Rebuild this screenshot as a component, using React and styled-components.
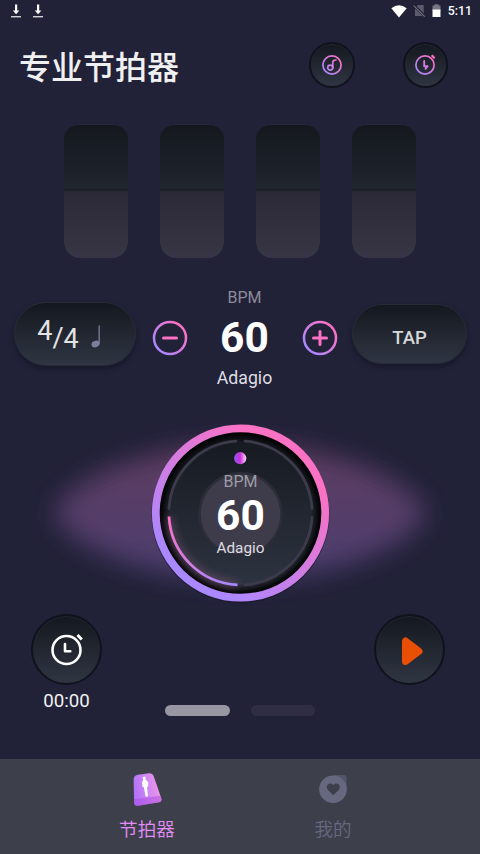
import React from 'react';
import styled, { createGlobalStyle, ThemeProvider } from 'styled-components';

const theme = {
  colors: {
    background: '#212138',
    nav: '#3d404b',
    text: '#f0f0f0',
    muted: '#8d8c99',
    mutedLight: '#9d9da5',
    pink: '#fb71c3',
    purple: '#aa88ff',
    play: '#e94f04',
    active: '#e38cf5',
    inactive: '#666880',
    surfaceTop: '#14181f',
    surfaceBottom: '#2f3542',
  },
};

const GlobalStyle = createGlobalStyle`
  * {
    box-sizing: border-box;
  }

  body {
    margin: 0;
    background: #212138;
    font-family: Roboto, 'Noto Sans CJK SC', sans-serif;
  }
`;

const Screen = styled.div`
  width: 480px;
  height: 854px;
  display: flex;
  flex-direction: column;
  overflow: hidden;
  color: ${({ theme }) => theme.colors.text};
  background: ${({ theme }) => theme.colors.background};

  > * {
    flex: none;
  }

  svg {
    display: block;
    flex: none;
  }
`;

const StatusBar = styled.div`
  height: 22px;
  padding: 0 8px 0 10px;
  display: flex;
  align-items: center;
  justify-content: space-between;
`;

const StatusGroup = styled.div`
  display: flex;
  align-items: center;
  gap: ${({ $gap }) => $gap}px;
`;

const Clock = styled.span`
  margin-left: 1px;
  font-size: 12.3px;
  font-weight: 500;
  line-height: 22px;
  color: #fff;
`;

const Header = styled.header`
  height: 86px;
  padding: 0 32px 0 19px;
  display: flex;
  align-items: center;
`;

const Title = styled.h1`
  margin: 0 auto 1px 0;
  font-family: 'Noto Sans CJK SC', sans-serif;
  font-size: 32px;
  line-height: 40px;
  font-weight: 500;
`;

const RoundButton = styled.button`
  width: ${({ $size }) => $size}px;
  height: ${({ $size }) => $size}px;
  padding: 0;
  display: grid;
  place-items: center;
  border: 2px solid #10121c;
  border-radius: 50%;
  background: linear-gradient(
    ${({ theme }) => theme.colors.surfaceTop},
    ${({ theme }) => theme.colors.surfaceBottom}
  );
  box-shadow: inset 0 1px 1px rgba(50, 60, 80, 0.45);
`;

const HeaderActions = styled.div`
  display: flex;
  gap: 48px;
`;

const Beats = styled.div`
  margin-top: 16px;
  display: flex;
  justify-content: center;
  gap: 32px;
`;

const BeatBar = styled.div`
  width: 64px;
  height: 134px;
  border-radius: 14px 14px 16px 16px;
  background: linear-gradient(#14181e, #20252e 64px, #191d25 66px, #2b2938 68px, #383644);
  box-shadow: inset 0 1px 0 #262a3a;
`;

const TempoRow = styled.div`
  height: 120px;
  margin-top: 20px;
  padding: 0 13px 0 14px;
  display: flex;
  align-items: center;
`;

const Pill = styled.button`
  width: ${({ $width }) => $width}px;
  height: ${({ $height }) => $height}px;
  padding: 0;
  margin: 0 0 8px ${({ $end }) => ($end ? 'auto' : 0)};
  display: flex;
  align-items: center;
  justify-content: center;
  border: 1px solid #272b38;
  border-radius: 32px;
  color: #d6d7d9;
  font: 500 18.5px Roboto, sans-serif;
  background: linear-gradient(
    ${({ theme }) => theme.colors.surfaceTop},
    ${({ theme }) => theme.colors.surfaceBottom}
  );
  box-shadow: 0 3px 5px rgba(15, 16, 28, 0.5);
`;

const PillLabel = styled.span`
  margin-top: 8px;
`;

const Signature = styled.span`
  display: flex;
  align-items: center;
  padding: 2px 12px 0 0;
  font-size: 27px;
  font-weight: 400;
  line-height: 30px;
  color: #e3e3e4;

  span:first-child {
    margin-bottom: 8px;
  }

  span:nth-child(2) {
    margin-top: 6px;
  }

  span:nth-child(3) {
    margin-top: 8px;
  }

  svg {
    margin: 3px 0 0 12px;
  }
`;

const StepButton = styled.button`
  padding: 0;
  margin: 0 0 1px ${({ $offset }) => $offset}px;
  border: 0;
  background: none;
`;

const Readout = styled.div`
  width: 80px;
  display: flex;
  flex-direction: column;
  align-items: center;
`;

const TempoReadout = styled(Readout)`
  margin-left: 16.5px;
`;

const DialReadout = styled(Readout)`
  margin: 13px 0 0 1px;
`;

const Unit = styled.span`
  font-size: 16px;
  line-height: 20px;
  color: ${({ theme, $light }) =>
    $light ? theme.colors.mutedLight : theme.colors.muted};
`;

const Bpm = styled.strong`
  font-size: 42.5px;
  line-height: ${({ $line }) => $line}px;
  font-weight: 700;
  color: #fff;
`;

const Marking = styled.span`
  font-size: ${({ $size }) => $size}px;
  line-height: ${({ $line }) => $line}px;
  color: #dedee2;
`;

const DialArea = styled.div`
  height: 212px;
  margin-top: 4px;
  display: grid;
  place-items: center;

  > * {
    grid-area: 1 / 1;
  }
`;

const Controls = styled.div`
  height: 145px;
  padding: 0 35px 0 31px;
  display: flex;
  align-items: flex-start;
  justify-content: space-between;
`;

const TimerBox = styled.div`
  width: 71px;
  display: flex;
  flex-direction: column;
  align-items: center;
`;

const TimerValue = styled.span`
  margin-top: 5px;
  font-size: 18.7px;
  line-height: 22px;
`;

const Pager = styled.div`
  margin: 91px 0 0 4px;
  display: flex;
  gap: 21px;
`;

const PageMark = styled.span`
  width: 64.5px;
  height: 11px;
  border-radius: 6px;
  background: ${({ $active }) => ($active ? '#9896a2' : '#2e2d43')};
`;

const NavBar = styled.nav`
  height: 95px;
  padding: 0 54px;
  display: flex;
  background: ${({ theme }) => theme.colors.nav};
`;

const NavItem = styled.div`
  flex: 1;
  display: flex;
  flex-direction: column;
  align-items: center;
  gap: 7px;
  padding-top: 12px;
  font-family: 'Noto Sans CJK SC', sans-serif;
  font-size: 18.6px;
  font-weight: 350;
  line-height: 28px;
  color: ${({ theme, $active }) =>
    $active ? theme.colors.active : theme.colors.inactive};
`;

const AccentGradient = ({ id, size }) => (
  <linearGradient
    id={id}
    gradientUnits="userSpaceOnUse"
    x1={size * 0.15}
    y1={size * 0.8}
    x2={size * 0.85}
    y2={size * 0.2}
  >
    <stop offset="0" stopColor={theme.colors.purple} />
    <stop offset="1" stopColor={theme.colors.pink} />
  </linearGradient>
);

const DownloadIcon = () => (
  <svg width="12" height="15" viewBox="0 0 12 15" fill="#fff">
    <path d="M5 0.5h2.2v6h2.2L6.1 10.2 2.8 6.5H5z" />
    <path d="M1 12h10v1.4H1z" opacity=".8" />
  </svg>
);

const WifiIcon = () => (
  <svg width="16" height="13" viewBox="0 0 16 13">
    <path d="M0.3 3.2Q8-2.8 15.7 3.2L8 12.6z" fill="#fff" />
  </svg>
);

const NoSimIcon = () => (
  <svg width="13" height="14" viewBox="0 0 13 14">
    <path d="M5 1h5.7v11H2V4z" fill="#5c5b6c" />
    <path d="M1 1.5l11 11" stroke="#212138" strokeWidth="2.6" />
    <path d="M0.7 1.6l11 11" stroke="#74737f" strokeWidth="1.1" />
  </svg>
);

const BatteryIcon = () => (
  <svg width="9" height="14" viewBox="0 0 9 14">
    <path d="M0.5 1.500h2V.3h4v1.200h2V7h-8z" fill="#777684" />
    <path d="M.5 5.500h8v7.500h-8z" fill="#fff" />
  </svg>
);

const SoundIcon = () => (
  <svg width="22" height="22" viewBox="0 0 22 22" fill="none" stroke="url(#sound)" strokeWidth="1.7">
    <AccentGradient id="sound" size={22} />
    <circle cx="11" cy="11" r="9.1" />
    <circle cx="9.2" cy="13.6" r="2.5" />
    <path d="M11.8 14V8.5Q11.8 5.8 15 6" strokeLinecap="round" />
  </svg>
);

const FlashTimerIcon = () => (
  <svg width="22" height="22" viewBox="0 0 22 22" fill="none" stroke="url(#flash)" strokeWidth="1.7">
    <AccentGradient id="flash" size={22} />
    <circle cx="11" cy="11" r="9.1" />
    <path d="M17.7 1.2l2.9 3" strokeWidth="2.2" stroke={theme.colors.pink} />
    <path d="M10.2 7v5.2h3.4l-2.1 2.6" strokeLinecap="round" strokeLinejoin="round" strokeWidth="1.9" />
  </svg>
);

const QuarterNote = () => (
  <svg width="10" height="23" viewBox="0 0 10 23" fill="#7e7e9c">
    <path d="M7.5 0.5h1.3v18H7.5z" />
    <ellipse cx="4.6" cy="19" rx="4.2" ry="3.3" transform="rotate(-20 4.6 19)" />
  </svg>
);

const StepIcon = ({ plus }) => {
  const id = plus ? 'plus' : 'minus';
  return (
    <svg width="36" height="36" viewBox="0 0 36 36" fill="none">
      <AccentGradient id={id} size={36} />
      <circle cx="18" cy="18" r="16" stroke={`url(#${id})`} strokeWidth="2.5" />
      <path
        d={plus ? 'M11.5 18h13M18 11.5v13' : 'M11.5 18h13'}
        stroke={theme.colors.pink}
        strokeWidth="3"
        strokeLinecap="round"
      />
    </svg>
  );
};

const DialGraphic = () => (
  <svg width="480" height="212" viewBox="0 0 480 212" fill="none">
    <defs>
      <linearGradient id="ring" x1=".25" y1=".88" x2=".8" y2=".2">
        <stop offset="0" stopColor="#aa88ff" />
        <stop offset="1" stopColor="#fb71c3" />
      </linearGradient>
      <linearGradient id="face" x1="0" y1="0" x2="0" y2="1">
        <stop offset="0" stopColor="#14181f" />
        <stop offset="1" stopColor="#2f3542" />
      </linearGradient>
      <linearGradient id="halo" x1="0" y1="0" x2="0" y2="1">
        <stop offset="0" stopColor="#5f3b60" />
        <stop offset="1" stopColor="#4c3d70" />
      </linearGradient>
      <linearGradient id="arc" x1="0" y1="0" x2=".8" y2="1">
        <stop offset="0" stopColor="#fb71c3" />
        <stop offset="1" stopColor="#aa88ff" />
      </linearGradient>
      <linearGradient id="knob">
        <stop offset="0" stopColor="#8d58f5" />
        <stop offset=".5" stopColor="#cb32d8" />
        <stop offset="1" stopColor="#ffd8f5" />
      </linearGradient>
      <radialGradient id="rim">
        <stop offset=".86" stopColor="#000" stopOpacity="0" />
        <stop offset=".96" stopColor="#000" stopOpacity=".85" />
        <stop offset="1" stopColor="#000" />
      </radialGradient>
      <filter id="haloBlur" x="-20%" y="-40%" width="140%" height="180%">
        <feGaussianBlur stdDeviation="13" />
      </filter>
      <filter id="softBlur" x="-30%" y="-30%" width="160%" height="160%">
        <feGaussianBlur stdDeviation="4" />
      </filter>
    </defs>
    <path
      d="M54 111C72 68 170 42 240 42S408 68 426 111C408 154 310 178 240 178S72 154 54 111z"
      fill="url(#halo)"
      filter="url(#haloBlur)"
    />
    <circle cx="240.5" cy="112" r="88" stroke="#151526" strokeWidth="2" opacity=".6" />
    <circle cx="240.5" cy="111" r="84" fill="url(#face)" />
    <circle cx="240.5" cy="111" r="82" fill="url(#rim)" />
    <circle cx="240.5" cy="111" r="84.7" stroke="url(#ring)" strokeWidth="7.8" />
    <g stroke="#3c3a4b" strokeWidth="2.8" strokeLinecap="round">
      <path d="M169 106.5A72 72 0 0 1 236 39.2" />
      <path d="M245 39.2A72 72 0 0 1 312 106.5" />
      <path d="M312 115.5A72 72 0 0 1 245 182.8" />
    </g>
    <path d="M169 115.5A72 72 0 0 0 237.5 182.8" stroke="#a86a96" strokeWidth="6" opacity=".45" filter="url(#softBlur)" />
    <path d="M169 114.5A72 72 0 0 0 237.5 182.8" stroke="url(#arc)" strokeWidth="2.8" />
    <circle cx="240.5" cy="112" r="41" fill="#3e3b4b" stroke="#2d2c39" strokeWidth="2.5" />
    <circle cx="240.2" cy="56.2" r="6.1" fill="url(#knob)" />
  </svg>
);

const TimerIcon = () => (
  <svg width="34" height="34" viewBox="0 0 34 34" fill="none" stroke="#fff" strokeWidth="2.6">
    <circle cx="16.5" cy="17" r="14" />
    <path d="M15 11v7.3h5.3" strokeLinecap="round" strokeLinejoin="round" />
    <path d="M27.5 2l4.3 4.5" strokeWidth="3" />
  </svg>
);

const PlayIcon = () => (
  <svg width="28" height="34" viewBox="0 0 28 34">
    <path
      d="M9.5 8v20.500L23 18.300z"
      fill={theme.colors.play}
      stroke={theme.colors.play}
      strokeWidth="7"
      strokeLinejoin="round"
    />
  </svg>
);

const MetronomeIcon = () => (
  <svg width="32" height="36" viewBox="0 0 32 36">
    <defs>
      <linearGradient id="body" x1="0" y1=".6" x2="1" y2=".4">
        <stop offset="0" stopColor="#b071fb" />
        <stop offset="1" stopColor="#f09ae8" />
      </linearGradient>
    </defs>
    <path
      d="M7 3.800L18 2.200q3.500-.4 4.500 2.500l7.800 22.600q1 3.200-2.200 3.900L7 34.800q-3.800.4-3.900-3.300L2.600 8.500q0-4 4.400-4.700z"
      fill="url(#body)"
    />
    <path d="M3 28.200L29.500 24.800l.8 2.500q1 3.200-2.200 3.900L7 34.800q-3.800.4-3.900-3.300z" fill="#a945dd" opacity=".45" />
    <path d="M11.600 6l2.700-.4.400 3 2.700 2.800-.200 4.200-1.200.3 1 9.300-2.300.5-1.800-9.500-1.400-.2-.5-4.200 1.200-3.200z" fill="#fff" />
  </svg>
);

const HeartIcon = () => (
  <svg width="32" height="36" viewBox="0 0 32 36">
    <path d="M16 4h11q2.500 0 2.500 2.500V18z" fill="#535569" />
    <circle cx="16" cy="18.200" r="13.800" fill="#666880" />
    <path
      d="M16.300 24.200l-5.400-5.300c-3.500-4.200 2-9.200 5.400-4.800 3.400-4.400 8.900.6 5.400 4.800z"
      fill="#3d404b"
    />
  </svg>
);

const BEATS = [1, 2, 3, 4];

const App = () => (
  <ThemeProvider theme={theme}>
    <GlobalStyle />
    <Screen>
      <StatusBar>
        <StatusGroup $gap={9.5}>
          <DownloadIcon />
          <DownloadIcon />
        </StatusGroup>
        <StatusGroup $gap={6}>
          <WifiIcon />
          <NoSimIcon />
          <BatteryIcon />
          <Clock>5:11</Clock>
        </StatusGroup>
      </StatusBar>

      <Header>
        <Title>专业节拍器</Title>
        <HeaderActions>
          <RoundButton $size={45.5} aria-label="音色">
            <SoundIcon />
          </RoundButton>
          <RoundButton $size={45.5} aria-label="定时">
            <FlashTimerIcon />
          </RoundButton>
        </HeaderActions>
      </Header>

      <Beats>
        {BEATS.map((beat) => (
          <BeatBar key={beat} />
        ))}
      </Beats>

      <TempoRow>
        <Pill $width={122} $height={64}>
          <Signature>
            <span>4</span>
            <span>/</span>
            <span>4</span>
            <QuarterNote />
          </Signature>
        </Pill>
        <StepButton $offset={16} aria-label="减速">
          <StepIcon />
        </StepButton>
        <TempoReadout>
          <Unit>BPM</Unit>
          <Bpm $line={59}>60</Bpm>
          <Marking $size={17.7} $line={22}>Adagio</Marking>
        </TempoReadout>
        <StepButton $offset={17} aria-label="加速">
          <StepIcon plus />
        </StepButton>
        <Pill $width={115} $height={60} $end>
          <PillLabel>TAP</PillLabel>
        </Pill>
      </TempoRow>

      <DialArea>
        <DialGraphic />
        <DialReadout>
          <Unit $light>BPM</Unit>
          <Bpm $line={47}>60</Bpm>
          <Marking $size={15.3} $line={18}>Adagio</Marking>
        </DialReadout>
      </DialArea>

      <Controls>
        <TimerBox>
          <RoundButton $size={71} aria-label="计时">
            <TimerIcon />
          </RoundButton>
          <TimerValue>00:00</TimerValue>
        </TimerBox>
        <Pager>
          <PageMark $active />
          <PageMark />
        </Pager>
        <RoundButton $size={71} aria-label="播放">
          <PlayIcon />
        </RoundButton>
      </Controls>

      <NavBar>
        <NavItem $active>
          <MetronomeIcon />
          <span>节拍器</span>
        </NavItem>
        <NavItem>
          <HeartIcon />
          <span>我的</span>
        </NavItem>
      </NavBar>
    </Screen>
  </ThemeProvider>
);

export default App;
